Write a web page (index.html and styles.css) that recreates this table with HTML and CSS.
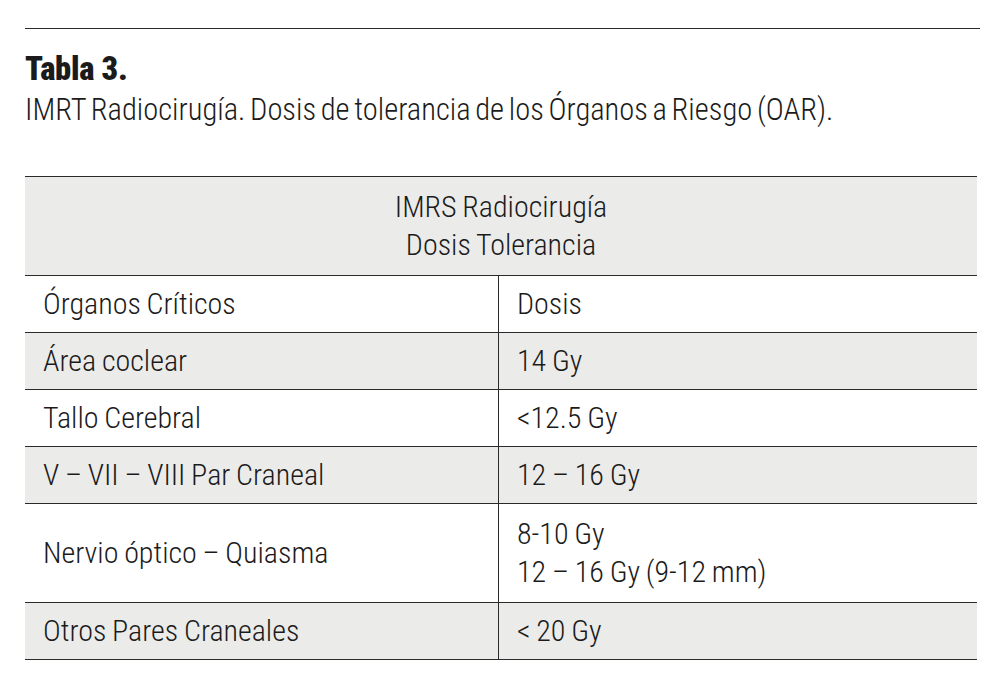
FILE: index.html
```html
<!DOCTYPE html>
<html lang="es">
<head>
<meta charset="utf-8">
<title>Tabla 3</title>
<link rel="stylesheet" href="styles.css">
</head>
<body>
<div class="page">
  <div class="caption">
    <div class="caption-title">Tabla 3.</div>
    <div class="caption-text">IMRT Radiocirugía. Dosis de tolerancia de los Órganos a Riesgo (OAR).</div>
  </div>
  <table class="dose-table">
    <thead>
      <tr class="shaded">
        <th colspan="2" class="head">IMRS Radiocirugía<br>Dosis Tolerancia</th>
      </tr>
    </thead>
    <tbody>
      <tr><td class="col-a">Órganos Críticos</td><td class="col-b">Dosis</td></tr>
      <tr class="shaded"><td class="col-a">Área coclear</td><td class="col-b">14 Gy</td></tr>
      <tr><td class="col-a">Tallo Cerebral</td><td class="col-b">&lt;12.5 Gy</td></tr>
      <tr class="shaded"><td class="col-a">V – VII – VIII Par Craneal</td><td class="col-b">12 – 16 Gy</td></tr>
      <tr class="tall"><td class="col-a">Nervio óptico – Quiasma</td><td class="col-b">8-10 Gy<br>12 – 16 Gy (9-12 mm)</td></tr>
      <tr class="shaded"><td class="col-a">Otros Pares Craneales</td><td class="col-b">&lt; 20 Gy</td></tr>
    </tbody>
  </table>
</div>
</body>
</html>
```
FILE: styles.css
```css
html, body {
  margin: 0;
  padding: 0;
  background: #ffffff;
}
body {
  font-family: "Roboto", "Open Sans", "Liberation Sans", sans-serif;
  font-stretch: 75%;
  font-weight: 350;
  color: #1b1b1b;
}
.page {
  padding: 28px 0 0 25px;
  width: 955px;
}
.caption {
  border-top: 1.5px solid #2a2a2a;
  padding-top: 20px;
  height: 148px;
  box-sizing: border-box;
}
.caption-title {
  font-weight: 900;
  font-size: 32.5px;
  line-height: 40px;
  letter-spacing: -0.2px;
}
.caption-text {
  font-size: 30.5px;
  line-height: 42px;
  white-space: nowrap;
  word-spacing: -2.2px;
}
.dose-table {
  width: 952px;
  border-collapse: collapse;
  font-size: 30px;
  line-height: 38px;
  word-spacing: -1px;
}
.dose-table th,
.dose-table td {
  border-top: 1.5px solid #2a2a2a;
  border-bottom: 1.5px solid #2a2a2a;
  font-weight: 350;
  padding: 0;
}
.shaded {
  background: #ebebea;
}
.head {
  text-align: center;
  height: 98px;
  vertical-align: middle;
  padding-top: 2px;
}
.dose-table td {
  height: 56.1px;
  vertical-align: middle;
}
.tall td {
  height: 98px;
}
.col-a {
  width: 455px;
  padding-left: 18px !important;
  border-right: 1.5px solid #2a2a2a;
}
.col-b {
  padding-left: 18px !important;
}
```
